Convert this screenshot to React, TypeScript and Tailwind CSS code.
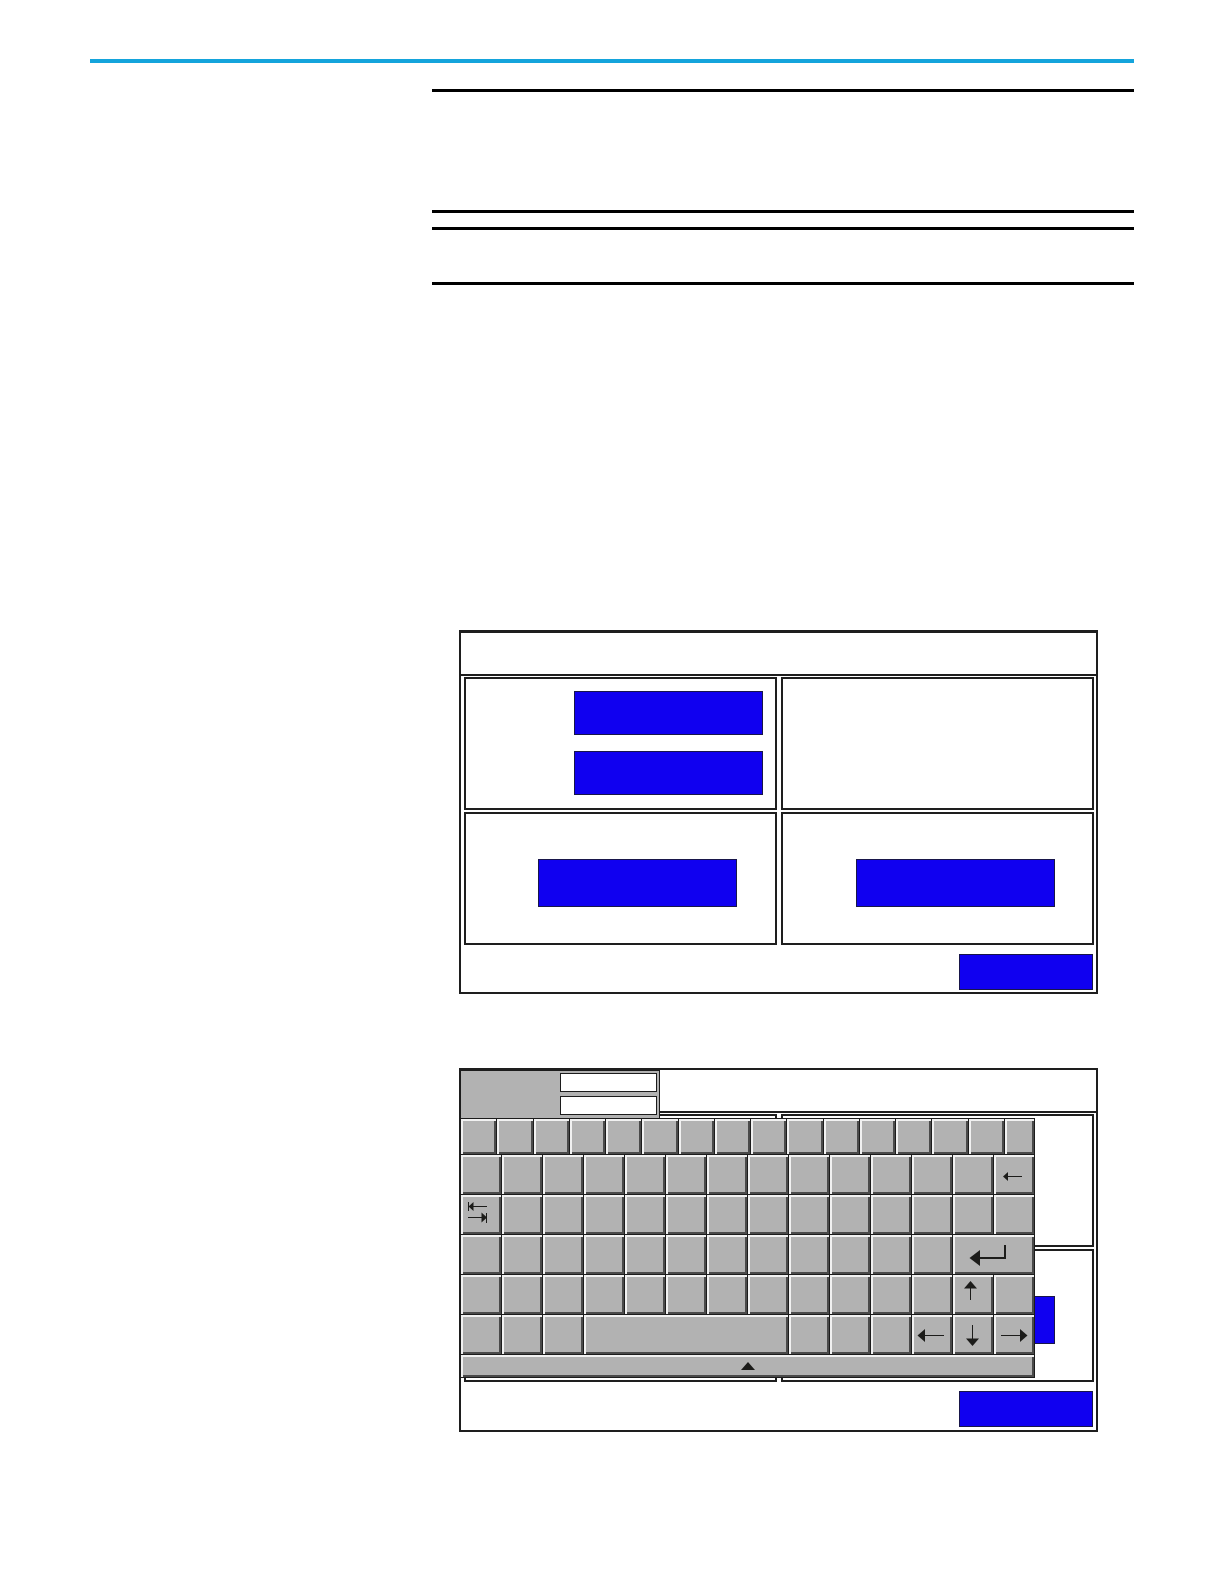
import type { ReactNode } from 'react';
import clsx from 'clsx';

const ROW_A = Array.from({ length: 16 }, (_, i) => `Function key ${i + 1}`);

interface KeyDef {
  label: string;
  className?: string;
  icon?: ReactNode;
}

const blanks = (row: number, from: number, count: number): KeyDef[] =>
  Array.from({ length: count }, (_, i) => ({ label: `Row ${row} key ${from + i}` }));

const Icon = ({ width = 40, children }: { width?: number; children: ReactNode }) => (
  <svg
    width={width}
    height={39}
    viewBox={`0 0 ${width} 39`}
    className="block fill-[#1c1c1a] stroke-[#1c1c1a]"
    aria-hidden="true"
  >
    {children}
  </svg>
);

const BackspaceIcon = () => (
  <Icon>
    <path d="M12 21.5H28" />
    <path stroke="none" d="M9 21.5L14 17v9z" />
  </Icon>
);

const TabIcon = () => (
  <Icon>
    <path d="M7.5 7v9M10 11.5H26M7 22.5H22M25.5 18v10" />
    <path stroke="none" d="M7.5 11.5L12.5 7v9zM26 22.5L20.5 17.5v10z" />
  </Icon>
);

const EnterIcon = () => (
  <Icon width={80}>
    <path strokeWidth="2" fill="none" d="M25 23H52V10" />
    <path stroke="none" d="M16.5 23L27 15v16z" />
  </Icon>
);

const UpIcon = () => (
  <Icon>
    <path d="M17.5 12V25" />
    <path stroke="none" d="M17.5 6L24 13.5H11z" />
  </Icon>
);

const DownIcon = () => (
  <Icon>
    <path d="M19.5 10V24" />
    <path stroke="none" d="M19.5 31L26 23.5H13z" />
  </Icon>
);

const LeftIcon = () => (
  <Icon>
    <path d="M12 20.5H32" />
    <path stroke="none" d="M5.5 20.5L13 14v13z" />
  </Icon>
);

const RightIcon = () => (
  <Icon>
    <path d="M7 20.5H27" />
    <path stroke="none" d="M33.5 20.5L26 14v13z" />
  </Icon>
);

const KEYS: KeyDef[] = [
  ...blanks(2, 1, 13),
  { label: 'Backspace', icon: <BackspaceIcon /> },
  { label: 'Tab', icon: <TabIcon /> },
  ...blanks(3, 2, 13),
  ...blanks(4, 1, 12),
  { label: 'Enter', className: 'col-span-2', icon: <EnterIcon /> },
  ...blanks(5, 1, 12),
  { label: 'Up', icon: <UpIcon /> },
  ...blanks(5, 14, 1),
  ...blanks(6, 1, 3),
  { label: 'Space', className: 'col-span-5' },
  ...blanks(6, 5, 3),
  { label: 'Left', icon: <LeftIcon /> },
  { label: 'Down', icon: <DownIcon /> },
  { label: 'Right', icon: <RightIcon /> },
];

const Key = ({ label, className, icon }: KeyDef) => (
  <button
    type="button"
    aria-label={label}
    className={clsx(
      'overflow-hidden border-r border-b border-[#1c1c1c] bg-[#b2b2b2] shadow-[inset_2px_2px_#f1f1f1,inset_-2px_-2px_#4a4a4a]',
      className,
    )}
  >
    {icon}
  </button>
);

const BlueButton = ({ label, className }: { label: string; className: string }) => (
  <button
    type="button"
    aria-label={label}
    className={clsx('border border-[#18164a] bg-[#1000f0]', className)}
  />
);

const Box = ({ className, children }: { className?: string; children?: ReactNode }) => (
  <div className={clsx('flex flex-col items-end border-2 border-[#1e1e1e]', className)}>
    {children}
  </div>
);

const Keyboard = () => (
  <div className="absolute top-0 -left-px w-[575px]">
    <div className="flex h-12 w-[200px] flex-col items-end gap-1 border-x border-t border-[#1c1c1c] bg-[#b2b2b2] pt-0.5 pr-0.5">
      <input
        type="text"
        aria-label="Current value"
        className="h-[19px] w-[97px] border border-[#1c1c1c] bg-white px-1 text-xs"
      />
      <input
        type="text"
        aria-label="New value"
        className="h-[19px] w-[97px] border border-[#1c1c1c] bg-white px-1 text-xs"
      />
    </div>
    <div className="border-t border-l border-[#1c1c1c]">
      <div className="grid h-9 grid-cols-[repeat(15,36fr)_30fr]">
        {ROW_A.map((label) => (
          <Key key={label} label={label} />
        ))}
      </div>
      <div className="grid auto-rows-[40px] grid-cols-14">
        {KEYS.map((k) => (
          <Key key={k.label} {...k} />
        ))}
      </div>
      <Key
        label="Move keyboard up"
        className="flex h-[23px] w-full items-center justify-center"
        icon={
          <svg width="14" height="8" viewBox="0 0 14 8" className="fill-[#1c1c1a]" aria-hidden="true">
            <path d="M7 0L14 8H0z" />
          </svg>
        }
      />
    </div>
  </div>
);

const Screen = ({ className, children }: { className: string; children?: ReactNode }) => (
  <section
    className={clsx(
      'relative mr-9 ml-[27px] border-x-2 border-b-2 border-[#1e1e1e]',
      className,
    )}
  >
    <div className="h-[43px] border-b-2 border-[#1e1e1e]" />
    <div className="grid auto-rows-[133px] grid-cols-2 gap-x-1 gap-y-0.5 pt-px pr-0.5 pl-[3px]">
      <Box className="gap-4 pt-3 pr-3">
        <BlueButton label="First setting" className="h-11 w-[189px]" />
        <BlueButton label="Second setting" className="h-11 w-[189px]" />
      </Box>
      <Box />
      <Box className="pt-[45px] pr-[38px]">
        <BlueButton label="Third setting" className="h-12 w-[199px]" />
      </Box>
      <Box className="pt-[45px] pr-[37px]">
        <BlueButton label="Fourth setting" className="h-12 w-[199px]" />
      </Box>
    </div>
    <div className="flex justify-end pt-[9px] pr-[3px] pb-0.5">
      <BlueButton label="Close" className="h-9 w-[134px]" />
    </div>
    {children}
  </section>
);

export default function App() {
  return (
    <main className="bg-white px-[90px] pt-[59px] pb-[152px]">
      <header className="h-1 bg-[#14a4dc]" />
      <div className="pt-[26px] pl-[342px]">
        <div className="h-[124px] border-y-3 border-black" />
        <div className="mt-[14px] h-[58px] border-y-3 border-black" />
        <div className="flex flex-col gap-[74px] pt-[345px]">
          <Screen className="border-t-3" />
          <Screen className="border-t-2 pb-px">
            <Keyboard />
          </Screen>
        </div>
      </div>
    </main>
  );
}
